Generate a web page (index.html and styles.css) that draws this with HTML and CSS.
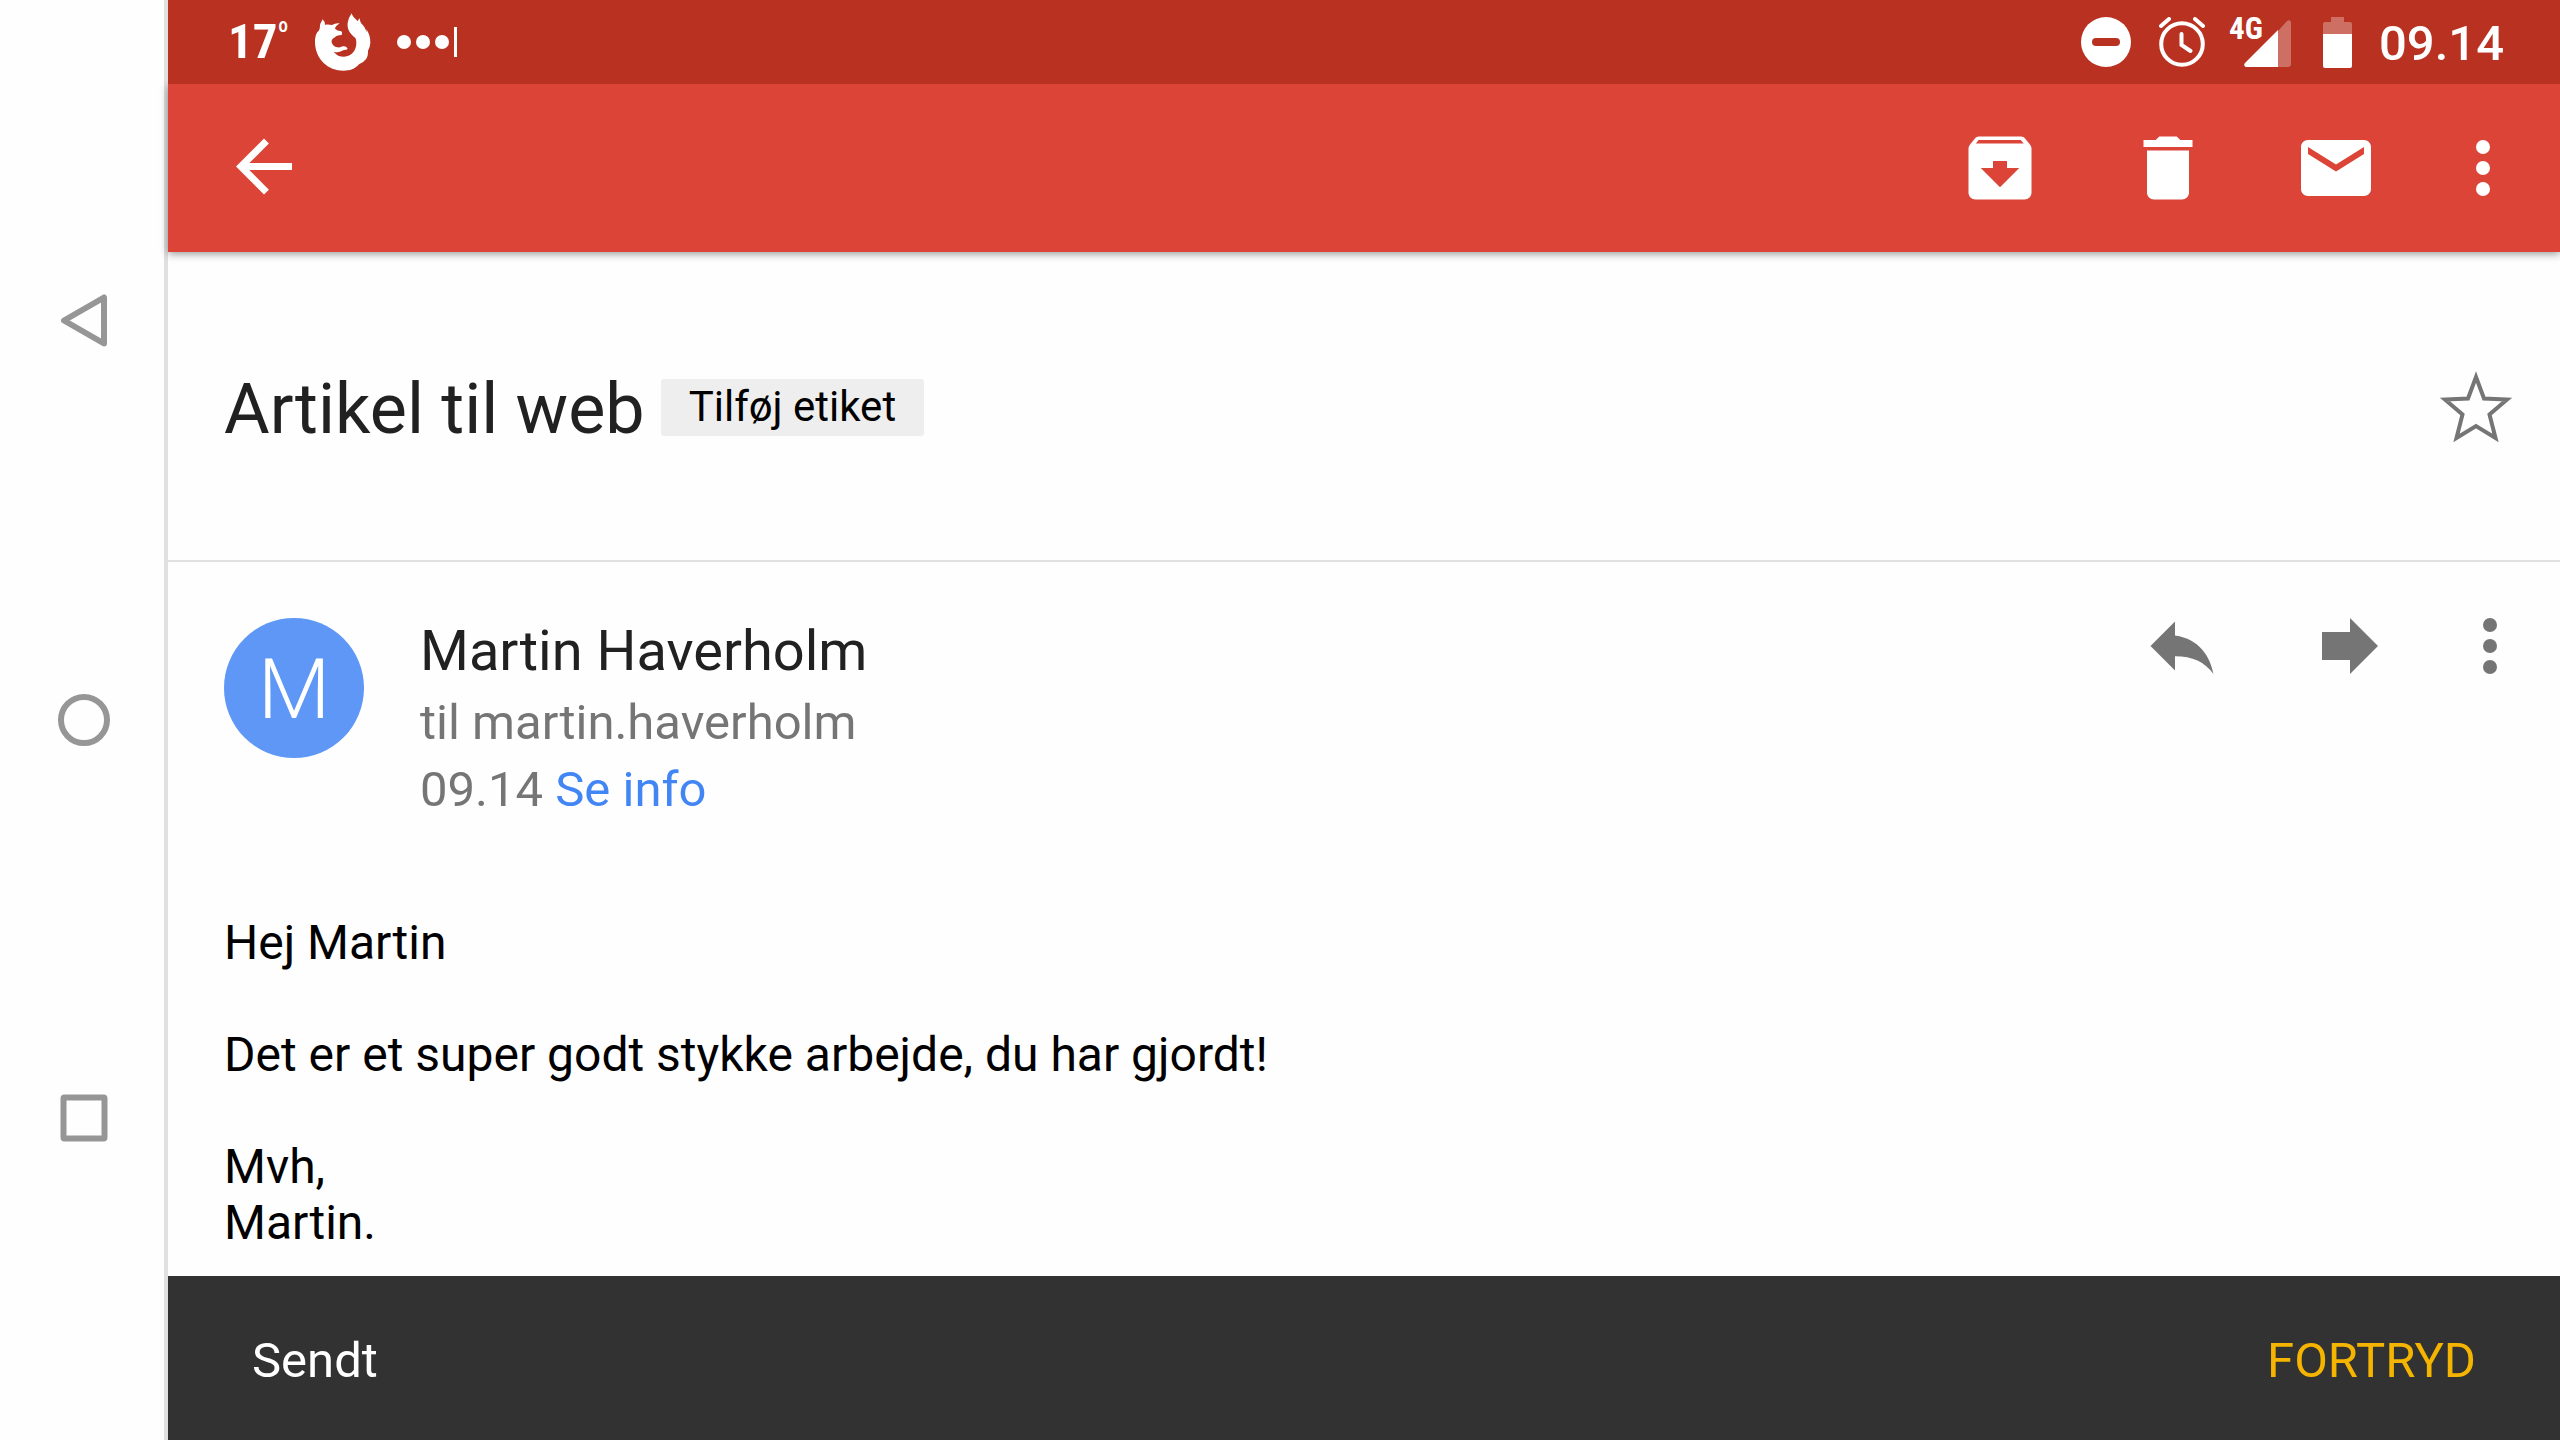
FILE: index.html
```html
<!DOCTYPE html>
<html lang="da">
<head>
<meta charset="utf-8">
<meta name="viewport" content="width=device-width, initial-scale=1">
<title>Artikel til web</title>
<link rel="stylesheet" href="styles.css">
</head>
<body>
<nav class="system-nav" aria-label="System">
  <button type="button" aria-label="Tilbage"><svg class="icon outline" viewBox="0 0 84 84"><path d="M62 18.500v46L22 41.500z"/></svg></button>
  <button type="button" aria-label="Hjem"><svg class="icon outline" viewBox="0 0 84 84"><circle cx="42" cy="42" r="23"/></svg></button>
  <button type="button" aria-label="Seneste apps"><svg class="icon outline" viewBox="0 0 84 84"><rect x="21.500" y="20.500" width="41" height="41" rx="1"/></svg></button>
</nav>
<div class="app">
  <div class="status-bar">
    <span class="temperature">17<sup>º</sup></span>
    <svg class="firefox" viewBox="468 36 168 174"><path d="M491 55Q498 62 498 71Q508 69 519 72Q530 65 542 67Q529 76 528 83Q534 89 547 91Q551 96 548 102Q531 103 529 108Q516 114 518 124Q520 134 531 138Q543 141 551 136Q562 134 566 143Q564 147 555 147C544 151 539 156 524 152C532 163 542 167 555 167C578 166 592 149 592 126C592 119 591 115 589 111C573 98 564 86 566 66Q568 50 578 37Q580 47 597 61Q598 55 602 52Q603 61 606 66C618 78 620 86 623 93C624 91 622 87 622 84C631 98 634 111 634 126Q633 140 627 149Q628 162 622 173Q615 183 600 190C587 205 573 209 554 209C507 209 468 174 468 122Q467 105 475 93Q480 90 482 83Q482 67 491 55z"/></svg>
    <span class="more-notes" aria-hidden="true"><i></i><i></i><i></i><b></b></span>
    <div class="status-icons">
      <svg class="dnd" viewBox="0 0 50 50"><circle cx="25" cy="25" r="25"/><rect class="cutout" x="11" y="21" width="28" height="8" rx="4"/></svg>
      <svg class="alarm" viewBox="0 0 48 50"><g class="line"><circle cx="24" cy="27" r="20.800"/><path d="M23.500 17v11l9 6M3 9l8-7M45 9l-8-7"/></g></svg>
      <span class="signal"><span>4G</span><svg viewBox="0 0 47 47"><path class="faint" d="M34 11L43 1Q47-1 47 3v41q0 3-3 3H34z"/><path d="M34 10v37H2q-3-1-1-4z"/></svg></span>
      <svg class="battery" viewBox="0 0 29 51"><path class="faint" d="M8 0h13v5h6q2 0 2 2v10H0V7q0-2 2-2h6z"/><path d="M0 17h29v32q0 2-2 2H2q-2 0-2-2z"/></svg>
      <time>09.14</time>
    </div>
  </div>
  <header class="toolbar">
    <button type="button" class="back" aria-label="Tilbage"><svg class="icon" viewBox="0 0 24 24"><path d="M20 10.600H7.800l5.600-5.600L12 3.600l-8 8 8 8 1.400-1.400-5.600-5.600H20z"/></svg></button>
    <button type="button" aria-label="Arkivér"><svg class="icon" viewBox="0 0 24 24"><path fill-rule="evenodd" d="M20.500 5.200l-1.400-1.700C18.900 3.200 18.500 3 18 3H6c-.5 0-.9.200-1.100.5L3.500 5.200C3.200 5.600 3 6 3 6.500V19c0 1.100.9 2 2 2h14c1.100 0 2-.9 2-2V6.500c0-.5-.2-.9-.5-1.300zM12 17.500L6.500 12H10v-2h4v2h3.500L12 17.500zM5.100 5l.8-1h12l.9 1H5.100z"/></svg></button>
    <button type="button" aria-label="Slet"><svg class="icon" viewBox="0 0 24 24"><path d="M6 19c0 1.100.9 2 2 2h8c1.100 0 2-.9 2-2V7H6v12zM19 4h-3.500l-1-1h-5l-1 1H5v2h14V4z"/></svg></button>
    <button type="button" aria-label="Markér som ulæst"><svg class="icon" viewBox="0 0 24 24"><path d="M20 4H4c-1.100 0-2 .9-2 2v12c0 1.100.9 2 2 2h16c1.100 0 2-.9 2-2V6c0-1.100-.9-2-2-2zm0 4l-8 5-8-5V6l8 5 8-5v2z"/></svg></button>
    <button type="button" class="menu" aria-label="Flere valg"><svg class="icon" viewBox="0 0 24 24"><circle cx="12" cy="6" r="2"/><circle cx="12" cy="12" r="2"/><circle cx="12" cy="18" r="2"/></svg></button>
  </header>
  <main>
    <section class="subject">
      <h1>Artikel til web</h1>
      <button type="button" class="label">Tilføj etiket</button>
      <button type="button" class="star" aria-label="Stjerne"><svg class="icon" viewBox="0 0 84 84"><path d="M42 12L50 33.500 73 34.500 55.500 49.500 61.500 73 42 61 22.500 73 28.500 49.500 11 34.500 34 33.500z"/></svg></button>
    </section>
    <article>
      <header class="sender">
        <div class="avatar" aria-hidden="true">M</div>
        <div class="details">
          <h2>Martin Haverholm</h2>
          <p>til martin.haverholm</p>
          <p>09.14 <a href="#info">Se info</a></p>
        </div>
        <div class="actions">
          <button type="button" aria-label="Svar"><svg class="icon" viewBox="0 0 24 24"><path d="M10 9V5l-7 7 7 7v-4.100c5 0 8.500 1.600 11 5.100-1-5-4-10-11-11z"/></svg></button>
          <button type="button" aria-label="Videresend"><svg class="icon" viewBox="0 0 24 24"><path d="M12 8V4l8 8-8 8v-4H4V8z"/></svg></button>
          <button type="button" class="menu" aria-label="Flere valg"><svg class="icon" viewBox="0 0 24 24"><circle cx="12" cy="6" r="2"/><circle cx="12" cy="12" r="2"/><circle cx="12" cy="18" r="2"/></svg></button>
        </div>
      </header>
      <div class="message">
        <p>Hej Martin</p>
        <p>Det er et super godt stykke arbejde, du har gjordt!</p>
        <p>Mvh,<br>Martin.</p>
      </div>
    </article>
  </main>
  <div class="snackbar" role="status">
    <span>Sendt</span>
    <button type="button">FORTRYD</button>
  </div>
</div>
</body>
</html>
```
FILE: styles.css
```css
* { box-sizing: border-box; }

body {
  margin: 0;
  min-height: 100vh;
  display: flex;
  background: #fefefe;
  color: #000;
  font: 49px/56px Roboto, "Liberation Sans", sans-serif;
}

h1, h2, p { margin: 0; font-weight: 400; }

button {
  display: flex;
  align-items: center;
  justify-content: center;
  margin: 0;
  padding: 0;
  border: 0;
  background: none;
  color: inherit;
  font: inherit;
  cursor: pointer;
}

a { color: #4285f4; text-decoration: none; }

svg { display: block; flex: none; fill: currentColor; }

.icon { width: 84px; height: 84px; }

/* Android navigation buttons */
.system-nav {
  flex: none;
  width: 168px;
  padding: 122px 0;
  display: flex;
  flex-direction: column;
  border-right: 4px solid #e0e0e0;
  color: #969696;
}
.system-nav button { flex: 1; padding-left: 4px; }
.outline { fill: none; stroke: currentColor; stroke-width: 6px; stroke-linejoin: round; }

.app { flex: 1; min-width: 0; display: flex; flex-direction: column; }

/* Status bar */
.status-bar {
  position: relative;
  z-index: 1;
  height: 84px;
  padding: 0 56px 0 60px;
  display: flex;
  align-items: center;
  background: #b93221;
  color: #fff;
}
.temperature { font-family: "Roboto Condensed", Roboto, sans-serif; font-weight: 700; }
.temperature sup { font-size: 28px; line-height: 28px; }
.firefox { width: 56px; height: 58px; margin: 0 26px; }
.more-notes { display: flex; align-items: center; gap: 5px; }
.more-notes i { width: 14px; height: 14px; border-radius: 50%; background: #fff; }
.more-notes b { width: 3px; height: 30px; background: #fff; }
.status-icons { margin-left: auto; display: flex; align-items: center; }
.dnd { width: 50px; height: 50px; }
.cutout { fill: #b93221; }
.alarm { width: 48px; height: 50px; margin: 0 23px 0 27px; }
.line { fill: none; stroke: currentColor; stroke-width: 4px; stroke-linecap: round; }
.signal { position: relative; width: 62px; height: 50px; display: flex; align-items: flex-end; justify-content: flex-end; }
.signal span {
  position: absolute;
  left: 0;
  top: 0;
  font: 700 31px/24px "Roboto Condensed", Roboto, sans-serif;
}
.signal svg { width: 47px; height: 47px; }
.faint { opacity: .3; }
.battery { width: 29px; height: 51px; margin: 0 27px 0 32px; }
.status-icons time { padding-top: 4px; font-weight: 500; }

/* Toolbar */
.toolbar {
  position: relative;
  height: 168px;
  padding: 0 14px 0 54px;
  display: flex;
  background: #db4437;
  color: #fff;
  box-shadow: 0 2px 8px rgba(0, 0, 0, .4);
}
.toolbar button { width: 168px; }
.toolbar .back { width: 84px; margin-right: auto; }
.toolbar .menu { width: 126px; }

main { flex: 1; }

/* Subject line */
.subject {
  min-height: 310px;
  padding: 2px 42px 0 56px;
  display: flex;
  align-items: center;
  border-bottom: 2px solid #e0e0e0;
}
.subject h1 { padding-top: 4px; color: #212121; font-size: 70px; line-height: 84px; }
.label {
  height: 57px;
  margin-left: 16px;
  padding: 0 28px;
  border-radius: 3px;
  background: #eee;
  font-size: 42px;
}
.star { margin-left: auto; }
.star path { fill: none; stroke: #757575; stroke-width: 4px; }

/* Message */
article { padding: 56px 28px 0 56px; }
.sender { display: flex; gap: 56px; color: #757575; }
.avatar {
  flex: none;
  width: 140px;
  height: 140px;
  border-radius: 50%;
  background: #5e97f6;
  color: #fff;
  font-size: 84px;
  font-weight: 300;
  line-height: 144px;
  text-align: center;
}
.details { flex: 1; line-height: 67px; }
.details h2 { margin-bottom: 4px; color: #212121; font-size: 56px; line-height: 67px; }
.actions { display: flex; height: 56px; }
.actions button { width: 168px; }
.actions .menu { width: 84px; margin-left: 14px; }
.message { margin-top: 92px; display: grid; gap: 56px; font-size: 48px; }

/* Confirmation bar */
.snackbar {
  min-height: 164px;
  padding: 5px 84px 0;
  display: flex;
  align-items: center;
  justify-content: space-between;
  background: #323232;
  color: #fff;
}
.snackbar button { color: #f4b400; }
```
